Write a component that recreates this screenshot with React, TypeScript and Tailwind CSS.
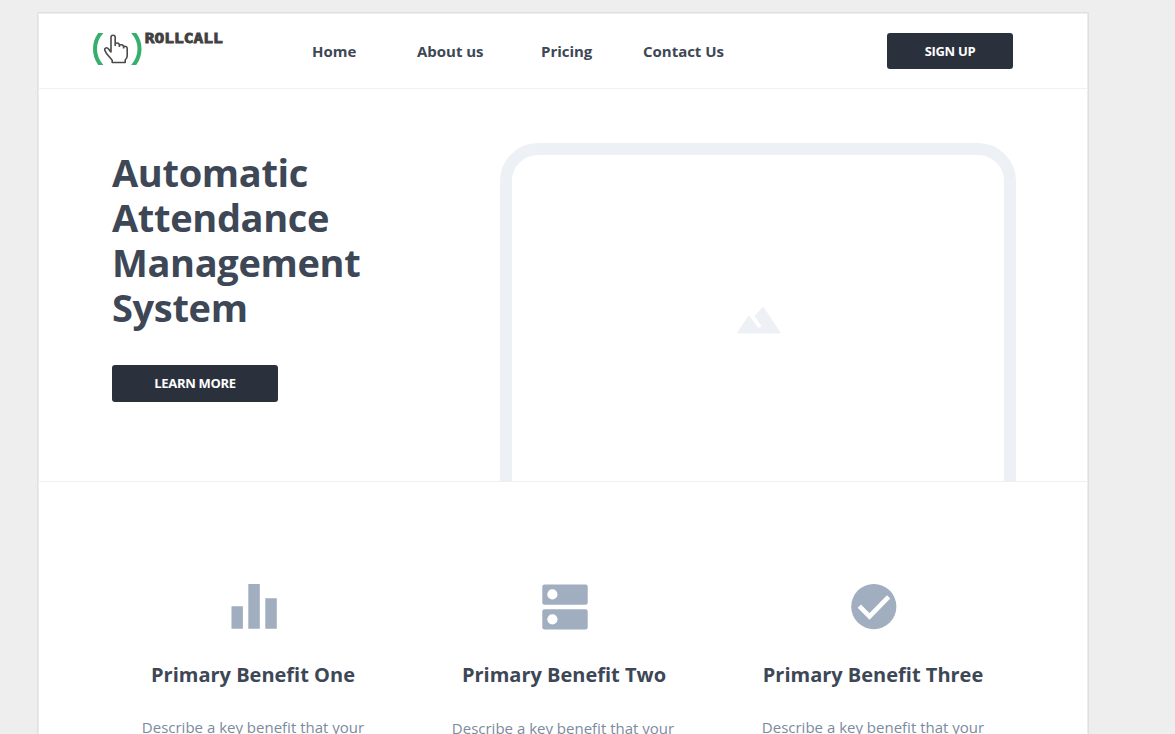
const NAV = [
  { label: 'Home', box: 'w-[44px]' },
  { label: 'About us', box: 'ml-[61px] w-[67px]' },
  { label: 'Pricing', box: 'ml-[57px] w-[52px]' },
  { label: 'Contact Us', box: 'ml-[50px] w-[82px]' },
];

function Logo() {
  return (
    <a className="flex h-[34px] w-[132px] items-start" aria-label="Rollcall">
      <svg className="mt-px h-[32px] w-[51px] shrink-0 overflow-hidden" viewBox="0 0 51 32" fill="none">
        <path d="M10.500-2C.5 8.500.5 23.500 10.500 34" stroke="#35b06c" strokeWidth="4" />
        <path d="M40-2C50 8.500 50 23.500 40 34" stroke="#35b06c" strokeWidth="4" />
        <path
          d="M19 19.500V4.300a2.100 2.100 0 0 1 4.200 0v7.500M23.200 13v-2.500q4-1.500 4.200 2V14M27.400 14v-2q4-1 4.200 2V15.500M31.600 15.500v-2q3.600-.8 3.600 2.200V23q0 2-2 4v2.500H20.200V27.500c-1-2.600-6-5.600-7.400-10.200c-.6-2.700 2.300-3.300 3.800-1.200l2.400 3.200"
          stroke="#4a4a4a"
          strokeWidth="1.600"
          strokeLinejoin="round"
        />
      </svg>
      <svg className="mt-px ml-[2px] h-[12px] w-[79px] shrink-0 overflow-visible">
        <text
          x="-0.300"
          y="10.300"
          textLength="78"
          lengthAdjust="spacingAndGlyphs"
          className="fill-[#404040] stroke-[#404040] font-['DejaVu_Sans_Mono',monospace] text-[13.500px] font-bold"
          strokeWidth="0.800"
        >
          ROLLCALL
        </text>
      </svg>
    </a>
  );
}

function BarsIcon() {
  return (
    <svg className="ml-[2px] h-[46px] w-[46px]" viewBox="0 0 46 46" fill="#a0aec0">
      <path d="M.5 22.200h11.400v22.600H.500zM17.300-.2h11.500v45H17.300zM34.300 14.300h11.500v30.500H34.300z" />
    </svg>
  );
}

function ServerIcon() {
  return (
    <svg className="ml-[2px] h-[46px] w-[46px]" viewBox="0 0 46 46">
      <rect x=".3" y=".4" width="45.400" height="20.300" rx="2.200" fill="#a0aec0" />
      <rect x=".3" y="25.200" width="45.400" height="20.300" rx="2.200" fill="#a0aec0" />
      <circle cx="10.400" cy="10.400" r="5.100" fill="white" />
      <circle cx="10.400" cy="35.300" r="5.100" fill="white" />
    </svg>
  );
}

function CheckIcon() {
  return (
    <svg className="ml-[2px] h-[46px] w-[46px]" viewBox="0 0 46 46">
      <circle cx="22.800" cy="22.600" r="22.600" fill="#a0aec0" />
      <path d="M8.300 22.200l10.200 10.200L37.600 12.800" fill="none" stroke="white" strokeWidth="4.600" />
    </svg>
  );
}

const BENEFITS = [
  { title: 'Primary Benefit One', Icon: BarsIcon, column: 'w-[310px]', copy: '' },
  { title: 'Primary Benefit Two', Icon: ServerIcon, column: 'w-[312px]', copy: 'mt-px mr-[2px]' },
  { title: 'Primary Benefit Three', Icon: CheckIcon, column: 'w-[306px]', copy: '' },
];

export default function App() {
  return (
    <div className="h-[734px] overflow-hidden bg-[#eeeeee] pt-[12px] pl-[37px] font-['Open_Sans',sans-serif] text-[#3d4756]">
      <main className="h-[760px] w-[1052px] border border-[#e0e0e0] bg-white shadow-[inset_0_0_0_1px_#ededed]">
        <header className="mx-px flex h-[76px] items-start border-b border-[#edf2f7] pl-[53px]">
          <div className="mt-[19px]">
            <Logo />
          </div>
          <nav className="mt-[27px] ml-[88px] flex text-[15px] leading-[22px] font-bold tracking-[-0.020px] whitespace-nowrap">
            {NAV.map((item) => (
              <a key={item.label} className={item.box}>
                {item.label}
              </a>
            ))}
          </nav>
          <button className="mt-[20px] ml-[162px] h-[36px] w-[126px] rounded-[3px] bg-[#2a313d] pt-px text-[13px] font-bold tracking-[-0.300px] text-white">
            SIGN UP
          </button>
        </header>

        <section className="flex h-[393px] overflow-hidden border-b border-[#edeff2]">
          <div className="w-[462px] shrink-0 pt-[61px] pl-[74px]">
            <h1 className="w-[260px] text-[38px] leading-[45px] font-bold tracking-[-0.350px]">
              Automatic Attendance Management System
            </h1>
            <button className="mt-[35px] block h-[37px] w-[166px] rounded-[3px] bg-[#2a313d] text-[13px] font-bold tracking-[-0.300px] text-white">
              LEARN MORE
            </button>
          </div>
          <div className="mt-[54px] flex h-[420px] w-[516px] justify-center rounded-[38px] border-[12px] border-[#edf1f6] pt-[151px]">
            <svg className="ml-[2px] h-[28px] w-[46px]" viewBox="0 0 46 28" fill="#edf1f6">
              <path d="M.5 27.500L12.800 9.300L22.400 22L25.500 20L18.500 10L27.200.500L45.200 27.500Z" />
            </svg>
          </div>
        </section>

        <section className="flex pt-[102px] pl-[60px]">
          {BENEFITS.map(({ title, Icon, column, copy }) => (
            <article key={title} className={`${column} flex shrink-0 flex-col items-center text-center whitespace-nowrap`}>
              <Icon />
              <h2 className="mt-[30px] text-[20px] leading-[30px] font-bold">{title}</h2>
              <div className={copy}>
                <p className="mt-[25px] text-[15px] leading-[24px] text-[#7b8a9e]">
                  Describe a key benefit that your
                </p>
              </div>
            </article>
          ))}
        </section>
      </main>
    </div>
  );
}
